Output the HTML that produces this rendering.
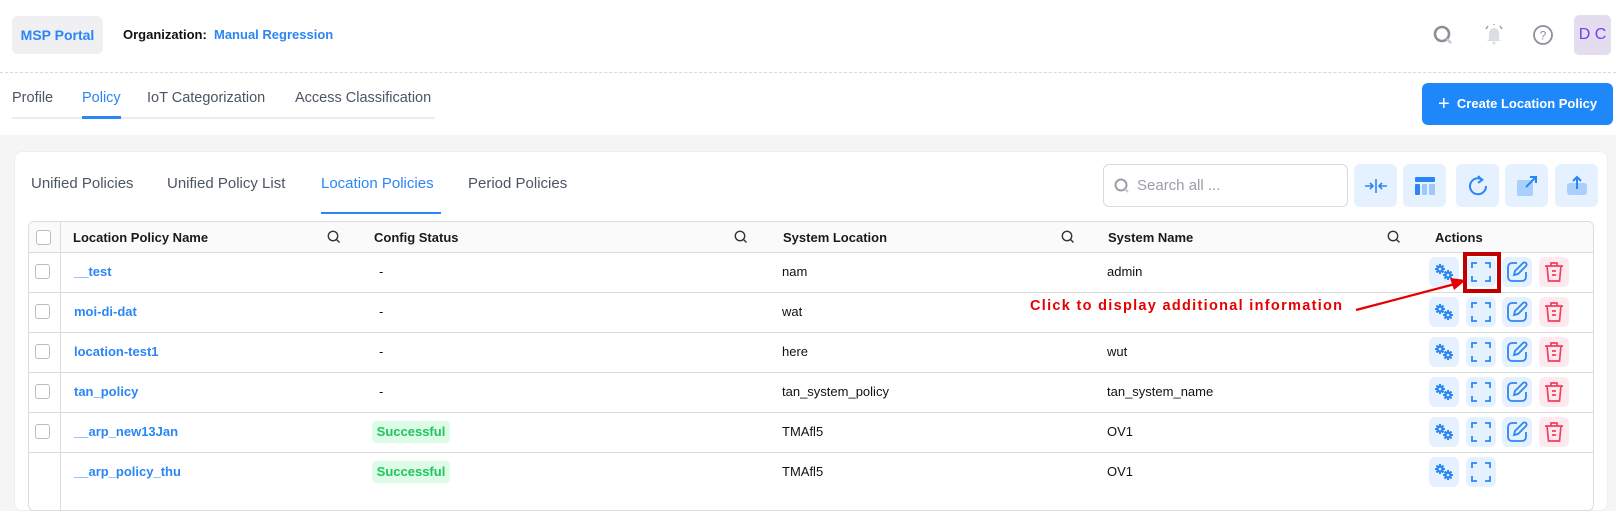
<!DOCTYPE html>
<html><head><meta charset="utf-8"><style>
*{box-sizing:border-box;margin:0;padding:0}
body{width:1616px;height:489px;overflow:hidden;background:#f5f5f5;font-family:"Liberation Sans",Arial,sans-serif;position:relative;color:#111}
.a{position:absolute}
.top{left:0;top:0;width:1616px;height:135px;background:#fff}
.dash{left:0;top:72px;width:1616px;border-top:1px dashed #d5d8e0}
.msp{left:12px;top:16px;width:91px;height:38px;background:#f0f0f3;border-radius:6px;color:#2b86f5;font-weight:bold;font-size:14px;line-height:38px;text-align:center}
.tab{top:90px;font-size:14.5px;color:#4b5563}
.card{left:14px;top:151px;width:1594px;height:360px;background:#fff;border:1px solid #eceef2;border-radius:8px}
.itab{top:175px;font-size:15px;color:#4b5563}
.tb{top:164px;width:43px;height:43px;background:#e5f1fe;border-radius:6px;display:flex;align-items:center;justify-content:center}
.tbl{left:28px;top:221px;width:1566px;height:290px;border:1px solid #dcdcdc;border-radius:6px;overflow:hidden;background:#fff}
.hd{left:0;top:0;width:1566px;height:31px;background:#fafafa;border-bottom:1px solid #dcdcdc}
.hl{position:absolute;top:8px;font-size:13px;font-weight:bold;color:#1a1a1a}
.cb{position:absolute;left:7px;width:15px;height:15px;border:1px solid #bdbdbd;border-radius:3px;background:#fff}
.ab{position:absolute;width:30px;height:30px;border-radius:6px;background:#e5f1fe;display:flex;align-items:center;justify-content:center}
</style></head><body>
<div class="a top"></div>
<div class="a dash"></div>
<div class="a msp">MSP Portal</div>
<div class="a" style="left:123px;top:27px;font-size:13px;font-weight:bold;color:#111">Organization:</div>
<div class="a" style="left:214px;top:27px;font-size:13px;font-weight:bold;color:#2b86f5">Manual Regression</div>
<svg class="a" style="left:1432px;top:24px" width="22" height="22" viewBox="0 0 22 22"><circle cx="10" cy="10" r="7" fill="none" stroke="#8b8f99" stroke-width="2.6"/><path d="M15 15l4 4" stroke="#c9ccd3" stroke-width="2.6"/></svg>
<svg class="a" style="left:1482px;top:22px" width="24" height="24" viewBox="0 0 24 24"><path d="M7 17V11a5 5 0 0110 0v6l2 2H5z" fill="#dadde3"/><path d="M4 7l2-3M20 7l-2-3M12 2v1" stroke="#9aa0aa" stroke-width="1.5"/><circle cx="12" cy="21" r="1.5" fill="#dadde3"/></svg>
<svg class="a" style="left:1532px;top:24px" width="22" height="22" viewBox="0 0 22 22"><circle cx="11" cy="11" r="9" fill="none" stroke="#8b8f99" stroke-width="1.8"/><text x="11" y="15.5" font-size="12" text-anchor="middle" fill="#8b8f99" font-family="Liberation Sans">?</text></svg>
<div class="a" style="left:1574px;top:15px;width:37px;height:40px;background:#e4dcef;border-radius:5px;color:#7c3aed;font-size:16px;line-height:40px;text-align:center">D C</div>

<div class="a tab" style="left:12px">Profile</div>
<div class="a tab" style="left:82px;color:#2b86f5">Policy</div>
<div class="a tab" style="left:147px">IoT Categorization</div>
<div class="a tab" style="left:295px">Access Classification</div>
<div class="a" style="left:12px;top:117px;width:423px;height:2px;background:#ececef"></div>
<div class="a" style="left:82px;top:116px;width:39px;height:3px;background:#2b86f5"></div>
<div class="a" style="left:1422px;top:83px;width:191px;height:42px;background:#1e88fa;border-radius:6px;color:#fff;font-weight:bold;font-size:13px;line-height:42px;padding-left:16px"><span style="font-size:20px;vertical-align:-2px;font-weight:normal">+</span>&nbsp; Create Location Policy</div>

<div class="a card"></div>
<div class="a itab" style="left:31px">Unified Policies</div>
<div class="a itab" style="left:167px">Unified Policy List</div>
<div class="a itab" style="left:321px;color:#2b86f5">Location Policies</div>
<div class="a itab" style="left:468px">Period Policies</div>
<div class="a" style="left:321px;top:212px;width:120px;height:2px;background:#2b86f5"></div>
<div class="a" style="left:1103px;top:164px;width:245px;height:43px;border:1px solid #d8dbe2;border-radius:6px;background:#fff"></div>
<svg class="a" style="left:1114px;top:178px" width="16" height="16" viewBox="0 0 16 16"><circle cx="7" cy="7" r="5.5" fill="none" stroke="#9a9ea8" stroke-width="2"/><path d="M11 11l3 3" stroke="#c5c8cf" stroke-width="2"/></svg>
<div class="a" style="left:1137px;top:177px;font-size:15px;color:#9a9ea8">Search all ...</div>
<div class="a tb" style="left:1354px"><svg width="24" height="20" viewBox="0 0 24 20"><path d="M12 3v14M1 10h8M6 7l3 3-3 3M23 10h-8M18 7l-3 3 3 3" stroke="#2b86f5" stroke-width="1.6" fill="none"/></svg></div>
<div class="a tb" style="left:1403px"><svg width="22" height="22" viewBox="0 0 22 22"><rect x="1" y="2" width="20" height="5" rx="1" fill="#2b86f5"/><rect x="1" y="9" width="5" height="11" rx="1" fill="#2b86f5"/><rect x="8" y="9" width="5" height="11" rx="1" fill="#9cc8fb"/><rect x="15" y="9" width="6" height="11" rx="1" fill="#9cc8fb"/></svg></div>
<div class="a tb" style="left:1456px"><svg width="22" height="22" viewBox="0 0 22 22"><path d="M16 5A8 8 0 1 0 19 11" stroke="#2b86f5" stroke-width="2" fill="none"/><path d="M11 1l4 4-4 3" stroke="#2b86f5" stroke-width="2" fill="none"/></svg></div>
<div class="a tb" style="left:1505px"><svg width="22" height="22" viewBox="0 0 22 22"><rect x="1" y="5" width="16" height="16" rx="2" fill="#a9d0fc"/><path d="M10 12l10-10M14 2h6v6" stroke="#2b86f5" stroke-width="2" fill="none"/></svg></div>
<div class="a tb" style="left:1555px"><svg width="22" height="22" viewBox="0 0 22 22"><rect x="1" y="8" width="20" height="12" rx="3" fill="#a9d0fc"/><path d="M11 14V2M7 6l4-4 4 4" stroke="#2b86f5" stroke-width="2" fill="none"/></svg></div>

<div class="a tbl">
 <div class="a hd"></div>
 <div style="position:absolute;left:31px;top:0;height:290px;border-left:1px solid #dcdcdc"></div>
 <div class="cb" style="top:8px"></div>
 <div class="hl" style="left:44px">Location Policy Name</div>
 <div class="hl" style="left:345px">Config Status</div>
 <div class="hl" style="left:754px">System Location</div>
 <div class="hl" style="left:1079px">System Name</div>
 <div class="hl" style="left:1406px">Actions</div>
 <svg style="position:absolute;left:298px;top:8px" width="14" height="14" viewBox="0 0 14 14"><circle cx="6" cy="6" r="4.7" fill="none" stroke="#333" stroke-width="1.4"/><path d="M9.5 9.5l3 3" stroke="#333" stroke-width="1.4"/></svg>
 <svg style="position:absolute;left:705px;top:8px" width="14" height="14" viewBox="0 0 14 14"><circle cx="6" cy="6" r="4.7" fill="none" stroke="#333" stroke-width="1.4"/><path d="M9.5 9.5l3 3" stroke="#333" stroke-width="1.4"/></svg>
 <svg style="position:absolute;left:1032px;top:8px" width="14" height="14" viewBox="0 0 14 14"><circle cx="6" cy="6" r="4.7" fill="none" stroke="#333" stroke-width="1.4"/><path d="M9.5 9.5l3 3" stroke="#333" stroke-width="1.4"/></svg>
 <svg style="position:absolute;left:1358px;top:8px" width="14" height="14" viewBox="0 0 14 14"><circle cx="6" cy="6" r="4.7" fill="none" stroke="#333" stroke-width="1.4"/><path d="M9.5 9.5l3 3" stroke="#333" stroke-width="1.4"/></svg>
</div>
<div id="rows"></div>
<script>
(function(){
var rows=[["__test","-","nam","admin",1,1],["moi-di-dat","-","wat","",1,1],["location-test1","-","here","wut",1,1],["tan_policy","-","tan_system_policy","tan_system_name",1,1],["__arp_new13Jan","S","TMAfl5","OV1",1,1],["__arp_policy_thu","S","TMAfl5","OV1",0,0]];
var gear='<svg width="20" height="18" viewBox="0 0 20 18"><g fill="#2b86f5"><circle cx="6" cy="6" r="3.6"/><circle cx="14" cy="12" r="3.6"/></g><g stroke="#2b86f5" stroke-width="2"><path d="M6 1v10M1 6h10M2.5 2.5l7 7M9.5 2.5l-7 7M14 7v10M9 12h10M10.5 8.5l7 7M17.5 8.5l-7 7"/></g><circle cx="6" cy="6" r="1.3" fill="#e5f1fe"/><circle cx="14" cy="12" r="1.3" fill="#e5f1fe"/></svg>';
var exp='<svg width="20" height="20" viewBox="0 0 20 20" fill="none" stroke="#2b86f5" stroke-width="1.8"><path d="M1 6V1h5M14 1h5v5M19 14v5h-5M6 19H1v-5"/></svg>';
var edit='<svg width="24" height="24" viewBox="0 0 24 24" fill="none" stroke="#2b86f5" stroke-width="1.8"><path d="M12 3H7a4 4 0 00-4 4v10a4 4 0 004 4h10a4 4 0 004-4v-5"/><path d="M9 15l1-4 8-8a2 2 0 013 3l-8 8z"/></svg>';
var del='<svg width="20" height="22" viewBox="0 0 20 22" fill="none" stroke="#f43f5e" stroke-width="1.7"><path d="M1 5h18M7 5V2h6v3M3 5l1.5 15h11L17 5M8 10h4M8 14h4"/></svg>';
var h='';
for(var i=0;i<rows.length;i++){var r=rows[i];var ty=252+i*40;var c=ty+20;
h+='<div class="a" style="left:28px;top:'+ty+'px;width:1566px;border-top:1px solid #dcdcdc"></div>';
if(i<5)h+='<div class="a" style="left:35px;top:'+(c-8)+'px;width:15px;height:15px;border:1px solid #bdbdbd;border-radius:3px;background:#fff"></div>';
h+='<div class="a" style="left:74px;top:'+(c-8)+'px;font-size:13px;font-weight:bold;color:#2b86f5">'+r[0]+'</div>';
if(r[1]=="S")h+='<div class="a" style="left:372px;top:'+(c-11)+'px;width:78px;height:22px;background:#dcfce7;color:#22c55e;font-weight:bold;font-size:13px;line-height:22px;text-align:center;border-radius:4px">Successful</div>';
else h+='<div class="a" style="left:379px;top:'+(c-8)+'px;font-size:13px">-</div>';
h+='<div class="a" style="left:782px;top:'+(c-8)+'px;font-size:13px">'+r[2]+'</div>';
h+='<div class="a" style="left:1107px;top:'+(c-8)+'px;font-size:13px">'+r[3]+'</div>';
h+='<div class="a ab" style="left:1429px;top:'+(c-15)+'px">'+gear+'</div>';
h+='<div class="a ab" style="left:1466px;top:'+(c-15)+'px">'+exp+'</div>';
if(r[4])h+='<div class="a ab" style="left:1502px;top:'+(c-15)+'px">'+edit+'</div>';
if(r[5])h+='<div class="a ab" style="left:1539px;top:'+(c-15)+'px;background:#fee9ee">'+del+'</div>';
}
document.getElementById('rows').innerHTML=h;
})();
</script>
<div class="a" style="left:1463px;top:252px;width:38px;height:41px;border:4px solid #c00000"></div>
<div class="a" style="left:1030px;top:298px;font-size:14.5px;font-weight:bold;color:#e60000;letter-spacing:1.3px">Click to display additional information</div>
<svg class="a" style="left:1350px;top:270px" width="120" height="45" viewBox="0 0 120 45"><path d="M6 40L105 14" stroke="#e60000" stroke-width="2.2"/><path d="M116 10L100 8l4 12z" fill="#e60000"/></svg>
</body></html>
